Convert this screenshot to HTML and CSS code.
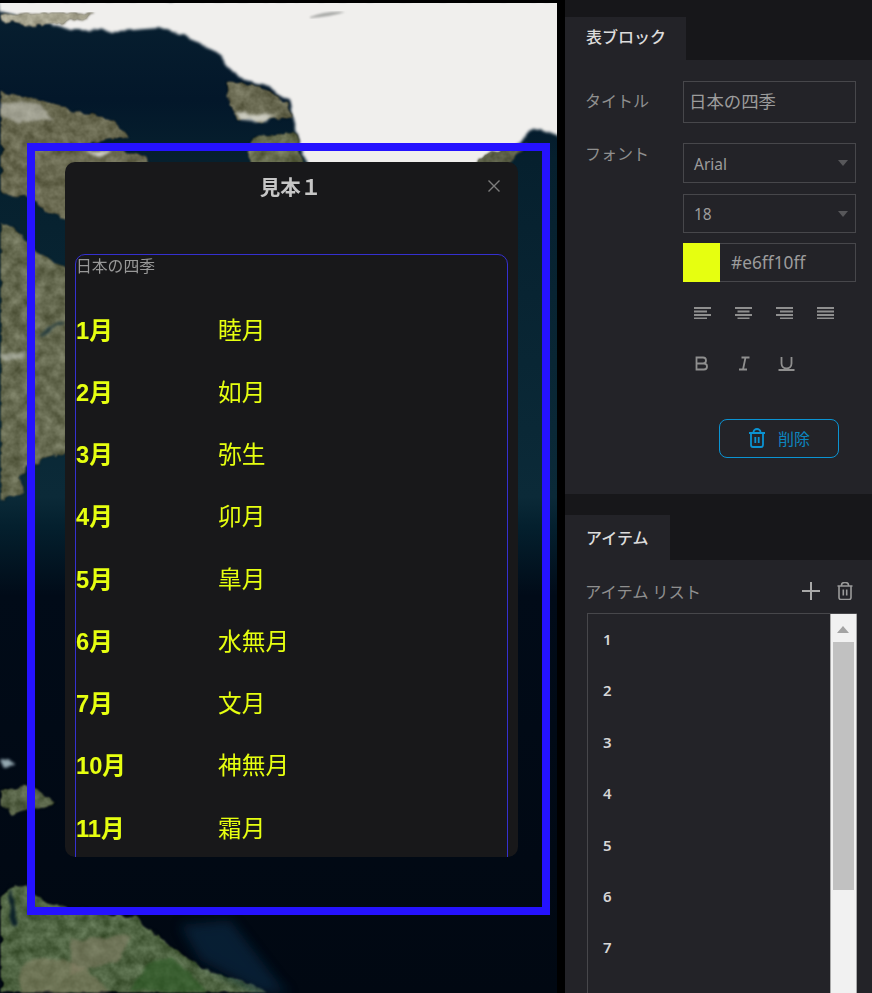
FILE: index.html
```html
<!DOCTYPE html>
<html lang="ja">
<head>
<meta charset="utf-8">
<title>表ブロック</title>
<link rel="stylesheet" href="styles.css">
</head>
<body>
<div class="stage">
  <main class="map">
    <svg class="map-art" viewBox="0 3 557 990" width="557" height="990" aria-hidden="true">
      <defs>
        <linearGradient id="sea" x1="0" y1="0" x2="0" y2="1">
          <stop offset="0" stop-color="#082030"/>
          <stop offset=".1" stop-color="#03172a"/>
          <stop offset=".16" stop-color="#06202e"/>
          <stop offset=".5" stop-color="#0b2a38"/>
          <stop offset=".53" stop-color="#04202e"/>
          <stop offset=".6" stop-color="#010b18"/>
          <stop offset="1" stop-color="#010812"/>
        </linearGradient>
        <filter id="soft" x="-5%" y="-5%" width="110%" height="110%"><feGaussianBlur stdDeviation="1.2"/></filter>
        <filter id="blur" x="-30%" y="-30%" width="160%" height="160%"><feGaussianBlur stdDeviation="6"/></filter>
        <filter id="edge" x="-3%" y="-3%" width="106%" height="106%" color-interpolation-filters="sRGB">
          <feTurbulence type="fractalNoise" baseFrequency=".08" numOctaves="2" seed="4" result="w"/>
          <feDisplacementMap in="SourceGraphic" in2="w" scale="7" xChannelSelector="R" yChannelSelector="G"/>
          <feGaussianBlur stdDeviation="1.500"/>
        </filter>
        <filter id="land" x="0" y="0" width="100%" height="100%" color-interpolation-filters="sRGB">
          <feTurbulence type="fractalNoise" baseFrequency=".09" numOctaves="3" seed="7" result="n"/>
          <feColorMatrix in="n" type="matrix" values="1 0 0 0 0  1 0 0 0 0  1 0 0 0 0  0 0 0 0 1" result="g"/>
          <feDisplacementMap in="SourceGraphic" in2="n" scale="9" xChannelSelector="R" yChannelSelector="G" result="d"/>
          <feGaussianBlur in="d" stdDeviation="1.200" result="s"/>
          <feComposite in="s" in2="g" operator="arithmetic" k1="0" k2="1" k3=".3" k4="-.15" result="b"/>
          <feComposite in="b" in2="s" operator="in"/>
        </filter>
      </defs>
      <rect x="0" y="0" width="557" height="993" fill="url(#sea)"/>
      <path d="M0 0H565V139L532 127L518 146L470 170L307 170L297 133L290 100L267 87L233 73L217 53L190 37L160 28L120 31L70 30L42 20L0 12Z" fill="#f0efed" filter="url(#edge)"/>
      <path d="M310 17Q325 11 345 12Q330 17 310 18Z" fill="#a9aaa8" filter="url(#soft)"/>
      <g filter="url(#land)">
        <path d="M0 14L40 12L95 12L85 20L50 24L42 28L0 20Z" fill="#a8a590"/>
        <path d="M224 80L260 86L288 102L292 118L260 122L236 118L228 100Z" fill="#6a6a52"/>
        <path d="M250 136L296 132L305 170L250 170Z" fill="#646a4c"/>
        <path d="M462 170L490 152L530 143L505 170Z" fill="#5c6048"/>
        <path d="M0 90L40 100L75 110L110 118L130 135L100 142L85 145L100 146L148 156L148 175L75 175L75 222L45 212L30 198L0 195Z" fill="#68684f"/>
        <path d="M0 222L20 232L35 250L75 272V450L45 458L30 467L20 477L25 493L0 500Z" fill="#666a50"/>
        <path d="M0 790L25 785L50 795L55 805L30 810L15 815L0 808Z" fill="#566246"/>
        <path d="M0 897L10 887L28 885L42 900L60 905L100 912L135 916L160 938L200 966L235 978L272 993H0Z" fill="#4f6442"/>
      </g>
      <g filter="url(#edge)">
        <path d="M0 104L35 102L55 120L20 122L0 115Z" fill="#d0d0c8" opacity=".55"/>
        <path d="M235 112L275 116L265 122L240 120Z" fill="#e2e2da" opacity=".8"/>
        <path d="M85 152H112L100 158Z" fill="#eeeee8" opacity=".8"/>
        <path d="M0 355L26 350L25 358L5 360Z" fill="#c9ccc4" opacity=".55"/>
        <path d="M0 760L10 758L14 766L4 768Z" fill="#b9cfd8" opacity=".8"/>
        <path d="M40 338Q52 325 65 322" fill="none" stroke="#243a3c" stroke-width="3"/>
        <path d="M10 885Q8 900 12 925Q20 930 16 915Z" fill="#0b2028"/>
        <path d="M70 940L130 935L120 960L70 975Z" fill="#88826a" opacity=".55"/>
        <path d="M20 965Q70 945 110 993H20Z" fill="#8b8368" opacity=".5"/>
        <path d="M130 990Q150 950 175 960L210 993Z" fill="#2b5a24" opacity=".6"/>
      </g>
      <path d="M180 925L230 920L280 985L290 993H260L200 960Z" fill="#0b3250" opacity=".55" filter="url(#blur)"/>
    </svg>

    <div class="frame"></div>

    <section class="modal">
      <header class="modal-head">
        <h2 class="modal-title">見本１</h2>
        <svg class="modal-close" viewBox="0 0 12 12" width="12" height="12" aria-hidden="true"><path d="M.5.5l11 11M11.5.5l-11 11"/></svg>
      </header>
      <div class="sheet">
        <div class="sheet-caption">日本の四季</div>
        <div class="sheet-table">
          <div class="row"><b>1月</b><span>睦月</span></div>
          <div class="row"><b>2月</b><span>如月</span></div>
          <div class="row"><b>3月</b><span>弥生</span></div>
          <div class="row"><b>4月</b><span>卯月</span></div>
          <div class="row"><b>5月</b><span>皐月</span></div>
          <div class="row"><b>6月</b><span>水無月</span></div>
          <div class="row"><b>7月</b><span>文月</span></div>
          <div class="row"><b>10月</b><span>神無月</span></div>
          <div class="row"><b>11月</b><span>霜月</span></div>
        </div>
      </div>
    </section>
  </main>

  <aside class="panel">
    <div class="tabstrip tabstrip-first"><div class="tab tab-wide">表ブロック</div></div>
    <div class="block block-form">
      <div class="field field-title">
        <label class="label">タイトル</label>
        <div class="box box-title">日本の四季</div>
      </div>
      <div class="field">
        <label class="label label-top">フォント</label>
        <div class="stack">
          <div class="box box-select">Arial<i class="caret"></i></div>
          <div class="box box-select box-select2">18<i class="caret"></i></div>
          <div class="color">
            <span class="swatch"></span>
            <span class="color-value">#e6ff10ff</span>
          </div>
          <div class="tools tools-align">
            <svg viewBox="0 0 17 12" width="17" height="12"><path d="M0 1h17M0 4.500h13M0 8h17M0 11.300h13"/></svg>
            <svg viewBox="0 0 17 12" width="17" height="12"><path d="M0 1h17M2.500 4.500h12M0 8h17M2.500 11.300h12"/></svg>
            <svg viewBox="0 0 17 12" width="17" height="12"><path d="M0 1h17M4 4.500h13M0 8h17M4 11.300h13"/></svg>
            <svg viewBox="0 0 17 12" width="17" height="12"><path d="M0 1h17M0 4.500h17M0 8h17M0 11.300h17"/></svg>
          </div>
          <div class="tools tools-style">
            <svg viewBox="0 0 17 15" width="17" height="15"><path d="M2.500 1.500h6.500a3 3 0 0 1 0 6H2.500zM2.500 7.500h7.500a3 3 0 0 1 0 6H2.500z"/></svg>
            <svg viewBox="0 0 17 15" width="17" height="15"><path d="M5.500 1.500h8M3 13.500h8M9.500 1.500l-2.500 12"/></svg>
            <svg viewBox="0 0 17 15" width="17" height="15"><path d="M3.500 1v6.500a5 5 0 0 0 10 0V1M.5 14h16"/></svg>
          </div>
          <button class="delete" type="button">
            <svg viewBox="0 0 18 20" width="18" height="20" aria-hidden="true"><path d="M1 5h16M5.500 5V4a3.500 3 0 0 1 7 0v1M3 5v12a2 2 0 0 0 2 2h8a2 2 0 0 0 2-2V5M7.300 9v6M10.700 9v6"/></svg>
            <span>削除</span>
          </button>
        </div>
      </div>
    </div>

    <div class="tabstrip"><div class="tab">アイテム</div></div>
    <div class="block block-items">
      <div class="items-head">
        <span class="label label-list">アイテム リスト</span>
        <div class="items-actions">
          <svg class="ico-plus" viewBox="0 0 18 18" width="18" height="18" aria-hidden="true"><path d="M9 0v18M0 9h18"/></svg>
          <svg class="ico-trash" viewBox="0 0 16 18" width="16" height="18" aria-hidden="true"><path d="M.5 4h15M4.500 4V3a3.500 2.500 0 0 1 7 0v1M2 4v11.500a2 2 0 0 0 2 2h8a2 2 0 0 0 2-2V4M6.300 7.500v6M9.700 7.500v6"/></svg>
        </div>
      </div>
      <div class="list">
        <ul class="list-items">
          <li>1</li><li>2</li><li>3</li><li>4</li><li>5</li><li>6</li><li>7</li>
        </ul>
        <div class="scrollbar">
          <i class="scroll-arrow"></i>
          <i class="scroll-thumb"></i>
        </div>
      </div>
    </div>
  </aside>
</div>
</body>
</html>
```

FILE: styles.css
```css
* { box-sizing: border-box; }

html, body {
  margin: 0;
  height: 993px;
  overflow: hidden;
  background: #000;
}

body {
  font-family: "Noto Sans", "Noto Sans CJK JP", sans-serif;
  color: #999;
}

.stage {
  display: flex;
  height: 993px;
  gap: 8px;
}

/* map canvas */
.map {
  position: relative;
  flex: 0 0 557px;
  height: 990px;
  margin-top: 3px;
  overflow: hidden;
}

.map-art { display: block; }

.frame {
  position: absolute;
  left: 27px;
  top: 140px;
  width: 523px;
  height: 772px;
  border: 8px solid #2512ff;
}

.modal {
  position: absolute;
  left: 65px;
  top: 159px;
  width: 453px;
  height: 695px;
  display: flex;
  flex-direction: column;
  padding: 0 10px 0 10px;
  background: #18181a;
  border-radius: 10px;
  overflow: hidden;
}

.modal-head {
  position: relative;
  flex: 0 0 92px;
  padding-top: 10px;
  text-align: center;
}

.modal-title {
  margin: 0 0 0 -2px;
  font: 700 20.500px/28px "Noto Sans CJK JP", sans-serif;
  color: #c6c6c6;
}

.modal-close {
  position: absolute;
  right: 8px;
  top: 18px;
  fill: none;
  stroke: #7d7d7d;
  stroke-width: 1.4;
}

.sheet {
  flex: 1;
  min-height: 720px;
  width: 433px;
  border: 1px solid #3530d0;
  border-radius: 10px 10px 0 0;
}

.sheet-caption {
  height: 44px;
  font: 15.800px/21px "Noto Sans CJK JP", sans-serif;
  color: #989898;
}

.sheet-table { padding-top: .4px; }

.row {
  display: grid;
  grid-template-columns: 142px 1fr;
  align-items: center;
  height: 62.250px;
  color: #e6ff10;
  font: 23.700px/30px "Liberation Sans", "Noto Sans CJK JP", sans-serif;
}

.row b { font-weight: 700; }

/* side panel */
.panel {
  flex: 0 0 307px;
  display: flex;
  flex-direction: column;
  height: 993px;
  background: #232328;
  overflow: hidden;
}

.tabstrip {
  flex: 0 0 66px;
  display: flex;
  align-items: flex-end;
  background: #17171a;
}

.tabstrip-first { flex-basis: 60px; }

.tab {
  width: 105px;
  height: 45px;
  padding-left: 21px;
  background: #232328;
  color: #dcdcdc;
  font: 500 16px/44px "Noto Sans CJK JP", sans-serif;
}

.tab-wide {
  width: 121px;
  height: 43px;
  line-height: 38px;
}

.block-form {
  flex: 0 0 434px;
  padding: 21px 16px 0 21px;
}

.field {
  display: grid;
  grid-template-columns: 97px 173px;
}

.field-title {
  align-items: center;
  margin-bottom: 20px;
}

.label {
  display: block;
  margin-top: -5px;
  margin-left: -1px;
  font: 16px/24px "Noto Sans CJK JP", sans-serif;
  color: #8f8f8f;
}

.label-top { margin-top: 0; line-height: 20px; }

.label-list { font-size: 16.300px; margin-top: 0; }

.stack {
  display: flex;
  flex-direction: column;
  align-items: stretch;
}

.box {
  position: relative;
  display: flex;
  align-items: center;
  border: 1px solid #47474b;
  color: #9c9c9c;
}

.box-title {
  height: 42px;
  padding: 0 0 2px 5px;
  font: 17.400px/24px "Noto Sans CJK JP", sans-serif;
}

.box-select {
  height: 40px;
  margin-bottom: 11px;
  padding: 1px 0 0 10px;
  font-size: 15.500px;
}

.box-select2 {
  height: 39px;
  margin-bottom: 10px;
  padding-top: 0;
}

.caret {
  position: absolute;
  right: 7px;
  top: 50%;
  margin-top: -3px;
  border-left: 5.500px solid transparent;
  border-right: 5.500px solid transparent;
  border-top: 6px solid #57575a;
}

.color {
  display: flex;
  height: 39px;
  border: 1px solid #47474b;
  border-left: 0;
}

.swatch {
  flex: 0 0 37px;
  margin: -1px 0;
  background: #e6ff10;
}

.color-value {
  padding-left: 11px;
  font-size: 17.300px;
  line-height: 37px;
  color: #9c9c9c;
}

.tools svg {
  fill: none;
  stroke: #8f8f8f;
  stroke-width: 1.800;
}

.tools {
  display: flex;
  padding-left: 11px;
}

.tools-align {
  gap: 24px;
  margin-top: 25px;
}

.tools-style {
  gap: 25px;
  margin-top: 37px;
  padding-left: 11px;
}

.delete {
  display: flex;
  align-items: center;
  justify-content: center;
  gap: 12px;
  width: 120px;
  height: 39px;
  margin: 48px 0 0 36px;
  padding: 0 0 1px 0;
  background: transparent;
  border: 1px solid #0b93d2;
  border-radius: 8px;
  color: #0c86c0;
  font: 16px/24px "Noto Sans CJK JP", sans-serif;
}

.delete svg {
  fill: none;
  stroke: #0b93d2;
  stroke-width: 1.800;
}

.block-items {
  flex: 1;
  padding: 19px 15px 0 21px;
}

.items-head {
  display: flex;
  align-items: center;
  justify-content: space-between;
  height: 24px;
  margin-bottom: 10px;
}

.items-actions {
  display: flex;
  align-items: center;
  gap: 17px;
  padding-right: 4px;
}

.ico-plus { stroke: #a8a8a8; stroke-width: 2; fill: none; }

.ico-trash { stroke: #9a9a9a; stroke-width: 1.600; fill: none; }

.list {
  display: flex;
  height: 500px;
  margin-left: 1px;
  border-left: 1px solid #47474b;
  border-top: 1px solid #47474b;
}

.list-items {
  flex: 1;
  margin: 0;
  padding: 0 0 0 15px;
  list-style: none;
  color: #d6d6d6;
  font: 600 15px/51.400px "Noto Sans", sans-serif;
}

.scrollbar {
  position: relative;
  flex: 0 0 27px;
  background: #f1f1f1;
  border-left: 1px solid #a9a9a9;
  border-right: 1px solid #a9a9a9;
}

.scroll-arrow {
  position: absolute;
  left: 6px;
  top: 12px;
  border-left: 6.500px solid transparent;
  border-right: 6.500px solid transparent;
  border-bottom: 7px solid #a3a3a3;
}

.scroll-thumb {
  position: absolute;
  left: 2px;
  right: 2px;
  top: 28px;
  height: 248px;
  background: #c1c1c1;
}
```
